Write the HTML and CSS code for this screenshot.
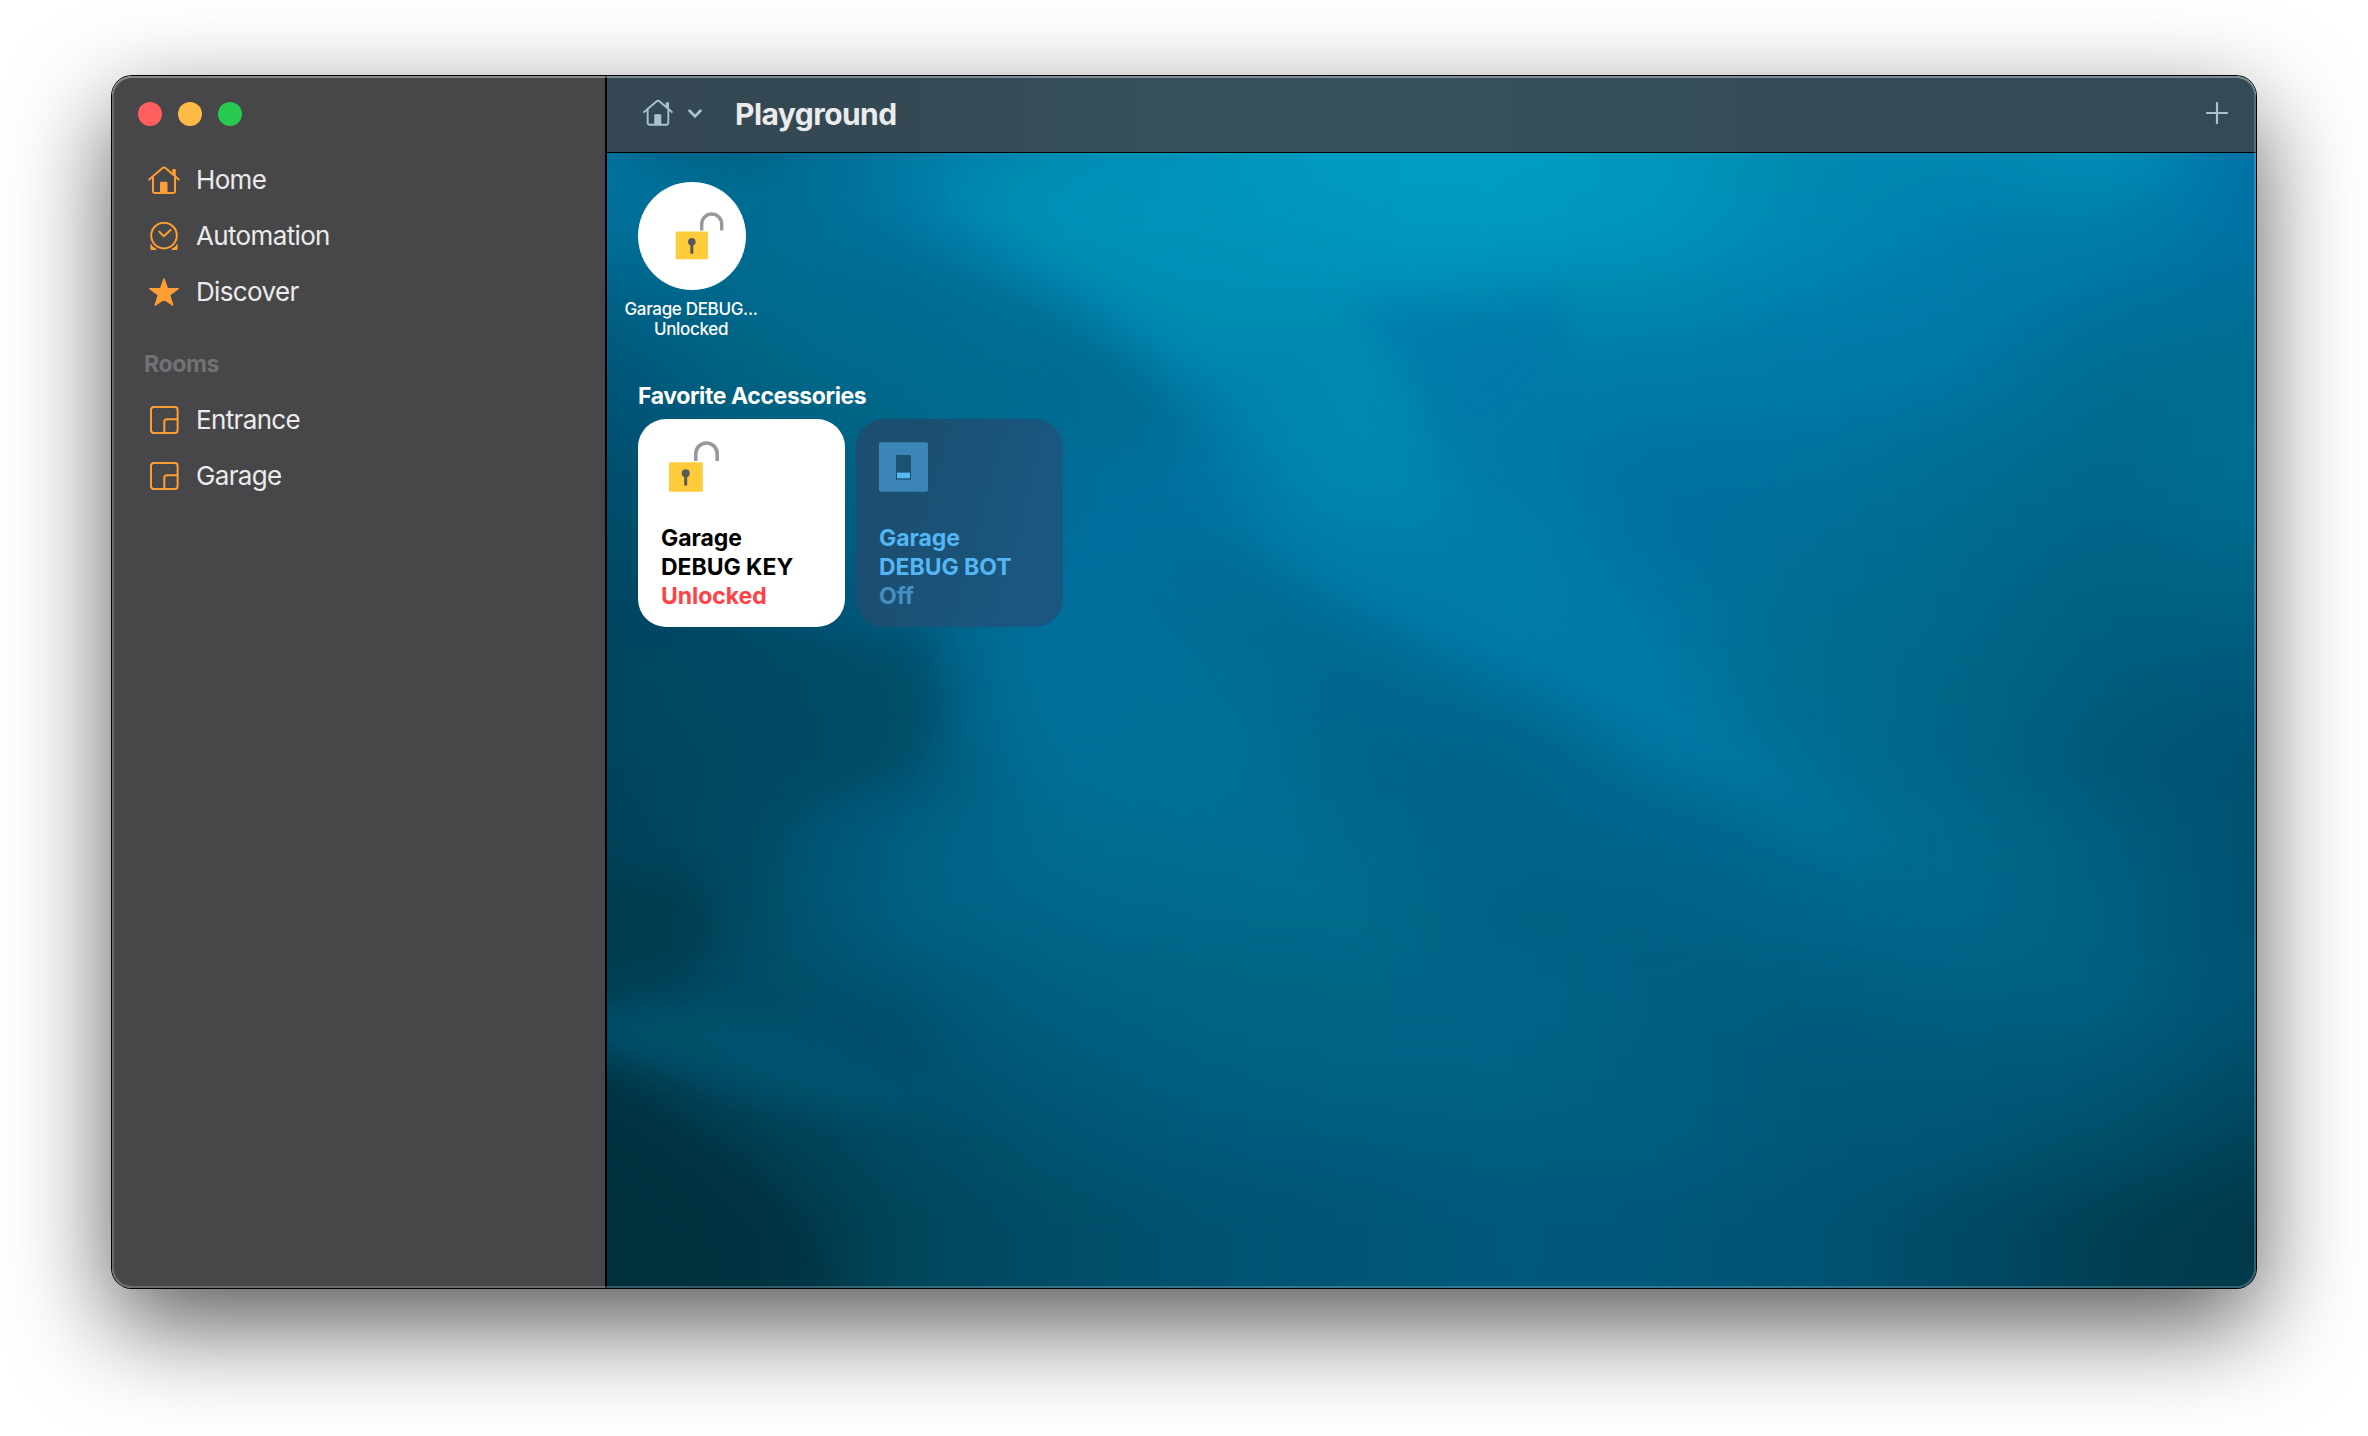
FILE: index.html
```html
<!DOCTYPE html>
<html lang="en">
<head>
<meta charset="utf-8">
<title>Home</title>
<link rel="stylesheet" href="styles.css">
</head>
<body>
<svg class="defs" aria-hidden="true">
  <symbol id="i-house" viewBox="0 0 32 28">
    <g fill="none" stroke="currentColor" stroke-width="2" stroke-linecap="round" stroke-linejoin="round">
      <path d="M1.2 13.4 L14.9 1.8 Q16 1 17.1 1.8 L30.8 13.4"/>
      <path d="M5 11.5 V25 Q5 27 7 27 H25 Q27 27 27 25 V11.5"/>
    </g>
    <path fill="currentColor" d="M24.2 8.5 V4 Q24.2 3 25.2 3 H26.8 Q27.8 3 27.8 4 V11.5 Z"/>
    <path fill="currentColor" d="M12 27 V16.8 Q12 15.8 13 15.8 H18.5 Q19.5 15.8 19.5 16.8 V27 Z"/>
  </symbol>
  <symbol id="i-clock" viewBox="0 0 32 28">
    <g fill="none" stroke="currentColor" stroke-width="2" stroke-linecap="round" stroke-linejoin="round">
      <circle cx="16" cy="13.6" r="12.8"/>
      <path d="M11.2 9.6 L15.8 14.3 L22.6 7.9"/>
    </g>
    <path fill="currentColor" d="M2.3 21.6 Q4.6 25.4 8.8 27 Q8.4 28 7.4 28 H3.6 Q2.3 28 2.3 26.6 Z M29.7 21.6 Q27.4 25.4 23.2 27 Q23.6 28 24.6 28 H28.4 Q29.7 28 29.7 26.6 Z"/>
  </symbol>
  <symbol id="i-star" viewBox="0 0 32 28">
    <path fill="currentColor" stroke="currentColor" stroke-width="1.4" stroke-linejoin="round" d="M16 .9 L19.4 10.5 L30.2 10.7 L21.6 17 L24.8 27.2 L16 21.2 L7.2 27.2 L10.4 17 L1.8 10.7 L12.6 10.5 Z"/>
  </symbol>
  <symbol id="i-room" viewBox="0 0 32 28">
    <g fill="none" stroke="currentColor" stroke-width="2">
      <rect x="3" y="1" width="26.6" height="26" rx="3"/>
      <path d="M16.3 27 V15.8 Q16.3 13.2 18.9 13.2 H29.6"/>
    </g>
  </symbol>
</svg>

<div class="window">
  <aside class="sidebar">
    <div class="lights">
      <span class="light light-close"></span>
      <span class="light light-min"></span>
      <span class="light light-zoom"></span>
    </div>
    <nav class="nav">
      <a class="nav-item"><svg class="nav-icon"><use href="#i-house"/></svg><span>Home</span></a>
      <a class="nav-item"><svg class="nav-icon"><use href="#i-clock"/></svg><span>Automation</span></a>
      <a class="nav-item"><svg class="nav-icon"><use href="#i-star"/></svg><span>Discover</span></a>
      <h2 class="nav-heading">Rooms</h2>
      <a class="nav-item"><svg class="nav-icon"><use href="#i-room"/></svg><span>Entrance</span></a>
      <a class="nav-item"><svg class="nav-icon"><use href="#i-room"/></svg><span>Garage</span></a>
    </nav>
  </aside>

  <main class="main">
    <header class="toolbar">
      <svg class="tool-house"><use href="#i-house"/></svg>
      <svg class="chevron" viewBox="0 0 14 10"><path d="M1.6 1.8 L7 7.4 L12.4 1.8" fill="none" stroke="currentColor" stroke-width="2.8" stroke-linecap="round" stroke-linejoin="round"/></svg>
      <h1 class="title">Playground</h1>
      <svg class="plus" viewBox="0 0 22 22"><path d="M11 1 V21 M1 11 H21" fill="none" stroke="currentColor" stroke-width="2.2" stroke-linecap="round"/></svg>
    </header>

    <section class="content">
      <div class="wallpaper">
        <div class="mesh">
          <i class="m1"></i><i class="m2"></i><i class="m3"></i><i class="m4"></i><i class="m5"></i>
          <i class="m6"></i><i class="m7"></i><i class="m8"></i><i class="m9"></i><i class="m10"></i>
          <i class="m11"></i><i class="m12"></i><i class="m13"></i><i class="m14"></i><i class="m15"></i>
        </div>
        <svg class="folds" viewBox="402 101 1092 752" preserveAspectRatio="none">
          <defs>
            <filter id="b8" x="-30%" y="-30%" width="160%" height="160%"><feGaussianBlur stdDeviation="10"/></filter>
            <filter id="b14" x="-30%" y="-30%" width="160%" height="160%"><feGaussianBlur stdDeviation="17"/></filter>
          </defs>
          <path filter="url(#b8)" fill="#005f80" opacity=".5" d="M402 80 L530 80 L500 112 L430 112 Z"/>
          <path filter="url(#b14)" fill="#006a90" opacity=".55" d="M520 165 L640 178 L700 205 L755 245 L790 295 L750 305 L640 270 L520 230 Z"/>
          <path filter="url(#b14)" fill="#0094ba" opacity=".55" d="M590 115 L720 115 L900 150 L890 195 L800 240 L730 195 L650 150 Z"/>
          <path filter="url(#b14)" fill="#008ab2" opacity=".55" d="M720 190 L880 190 L925 240 L955 330 L965 370 L880 350 L800 260 Z"/>
          <path filter="url(#b8)" fill="#0078a8" opacity=".65" d="M893 200 L960 202 L1040 200 L1030 250 L960 300 L935 250 Z"/>
          <path filter="url(#b14)" fill="#007ca8" opacity=".5" d="M860 330 L960 340 L1090 430 L1220 540 L1260 580 L1120 515 L990 440 L860 370 Z"/>
          <path filter="url(#b14)" fill="#00628a" opacity=".45" d="M770 345 L870 395 L1000 465 L1120 530 L1250 600 L1130 610 L960 580 L880 490 Z"/>
          <path filter="url(#b14)" fill="#00719a" opacity=".4" d="M640 400 L760 400 L830 470 L900 600 L780 560 L650 500 Z"/>
          <path filter="url(#b8)" fill="#00465e" opacity=".5" d="M380 420 L610 420 L622 470 L600 515 L535 530 L512 560 L505 600 L490 630 L380 640 Z"/>
          <path filter="url(#b8)" fill="#003a4c" opacity=".6" d="M380 580 L455 580 L475 620 L450 645 L380 645 Z"/>
          <path filter="url(#b8)" fill="#005472" opacity=".7" d="M380 668 L480 666 L560 700 L640 740 L560 735 L470 710 L380 695 Z"/>
          <path filter="url(#b8)" fill="#004c68" opacity=".5" d="M540 655 L600 662 L630 700 L600 712 L560 690 Z"/>
          <path filter="url(#b8)" fill="#003040" opacity=".6" d="M380 705 L430 728 L490 765 L540 815 L562 880 L380 880 Z"/>
        </svg>
      </div>

      <div class="body">
        <div class="status">
          <div class="status-disc">
            <svg viewBox="0 0 108 108">
              <path d="M63.7 48.5 V42 a10 10 0 0 1 20 0 V48.5" fill="none" stroke="#999" stroke-width="3.4"/>
              <rect x="37.7" y="49.5" width="32.3" height="27.8" rx="1.4" fill="#fecb3b"/>
              <circle cx="53.8" cy="59.8" r="3.8" fill="#58585a"/>
              <path d="M53.8 60 V71.7" stroke="#58585a" stroke-width="3"/>
            </svg>
          </div>
          <div class="status-name">Garage DEBUG...</div>
          <div class="status-value">Unlocked</div>
        </div>

        <h2 class="section-title">Favorite Accessories</h2>
        <div class="cards">
          <article class="card card-on">
            <svg class="card-icon" viewBox="0 0 60 52">
              <path d="M33.8 20 V12.7 a10.7 10.7 0 0 1 21.4 0 V20" fill="none" stroke="#999" stroke-width="3.6"/>
              <rect x="7" y="21.3" width="33.8" height="29.5" rx="1.4" fill="#fecb3b"/>
              <circle cx="23.7" cy="32.2" r="4" fill="#58585a"/>
              <path d="M23.7 32 V44.5" stroke="#58585a" stroke-width="3"/>
            </svg>
            <div class="card-text">
              <div>Garage</div>
              <div>DEBUG KEY</div>
              <div class="card-state">Unlocked</div>
            </div>
          </article>
          <article class="card card-off">
            <svg class="card-icon" viewBox="0 0 60 52">
              <rect x="-1" y="1.2" width="49" height="49.6" rx="2" fill="#3b86b6"/>
              <rect x="16" y="14" width="15" height="24" fill="#1b526f"/>
              <rect x="16" y="36.5" width="15" height="2" fill="#0b405e"/>
              <rect x="17" y="31.6" width="13" height="5.8" fill="#55b9f4"/>
            </svg>
            <div class="card-text">
              <div>Garage</div>
              <div>DEBUG BOT</div>
              <div class="card-state">Off</div>
            </div>
          </article>
        </div>
      </div>
    </section>
  </main>
</div>
</body>
</html>
```
FILE: styles.css
```css
* { box-sizing: border-box; }

body {
  margin: 0;
  height: 1436px;
  padding: 76px 112px;
  background: #fff;
  font-family: Inter, "Liberation Sans", sans-serif;
  overflow: hidden;
}

h1, h2 { margin: 0; }
.defs { display: none; }

.window {
  position: relative;
  display: flex;
  width: 2144px;
  height: 1212px;
  border-radius: 20px;
  box-shadow: 0 0 0 1px #000, 0 36px 100px rgba(0, 0, 0, .66);
}

/* bright hairline just inside the window edge */
.window::after {
  content: "";
  position: absolute;
  inset: 0;
  border-radius: 20px;
  box-shadow: inset 0 0 0 2px rgba(255, 255, 255, .2), inset 0 2px 0 rgba(255, 255, 255, .2);
  pointer-events: none;
}

.sidebar {
  width: 495px;
  padding-top: 26px;
  background: #474749;
  border-right: 2px solid #000;
  border-radius: 20px 0 0 20px;
}

.lights { display: flex; gap: 16px; padding-left: 26px; }
.light { width: 24px; height: 24px; border-radius: 50%; }
.light-close { background: #ff5f5d; }
.light-min { background: #febb45; }
.light-zoom { background: #27c94f; }

.nav { margin-top: 26px; }
.nav-item {
  display: flex;
  align-items: center;
  gap: 16px;
  height: 56px;
  padding-left: 36px;
  color: #ebebec;
  font-size: 26px;
  line-height: 32px;
  letter-spacing: -.65px;
}
.nav-item span { padding-bottom: 1px; }
.nav-icon { width: 32px; height: 28px; color: #ff9f33; }
.nav-heading {
  height: 72px;
  padding: 30px 0 0 32px;
  color: #727274;
  font-size: 23px;
  font-weight: 650;
  line-height: 29px;
  letter-spacing: -.35px;
}

.main {
  flex: 1;
  display: flex;
  flex-direction: column;
  border-radius: 0 20px 20px 0;
  overflow: hidden;
}

.toolbar {
  display: flex;
  align-items: center;
  height: 77px;
  padding: 0 28px 0 36px;
  border-bottom: 1px solid #000;
  background: linear-gradient(90deg, #344753 0, #344954 18%, #35505a 32%, #35515b 50%, #344c57 72%, #344a56 100%);
  color: #a9c2d0;
}
.tool-house { width: 30px; height: 27px; margin-bottom: 3px; }
.chevron { width: 14px; height: 10px; margin-left: 15px; }
.title {
  margin-left: 33px;
  color: #ebebed;
  font-size: 30px;
  font-weight: 650;
  line-height: 38px;
  letter-spacing: -.55px;
}
.plus { width: 22px; height: 22px; margin: 0 0 3px auto; }

.content { position: relative; flex: 1; overflow: hidden; }

/* wallpaper: colour strips melted together, with softer folds over them */
.wallpaper { position: absolute; inset: 0; overflow: hidden; background: #006a90; }
.mesh {
  position: absolute;
  inset: -76px -80px -80px;
  display: flex;
  flex-direction: column;
  filter: blur(32px);
}
.mesh i { flex: 0 0 76px; }
.folds { position: absolute; inset: 0; width: 100%; height: 100%; }

.mesh .m1 { flex-basis: 114px; background: linear-gradient(90deg, #0074a0 80px, #00688c, #0078a2, #008cb4, #0094bc, #009cc2, #009ec2, #0098bc, #0088b0, #0086b0, #0090b8, #0070a4 calc(100% - 80px)); }
.m2 { background: linear-gradient(90deg, #00709c 80px, #006c90, #0076a4, #008cb4, #0094ba, #0098be, #009ac0, #0094bc, #0088b2, #007eac, #007ea8, #0070a4 calc(100% - 80px)); }
.m3 { background: linear-gradient(90deg, #005f84 80px, #006a8c, #006a90, #007aa4, #0088b2, #008eb6, #0086b0, #0086ae, #007eac, #007aa8, #0072a0, #006e98 calc(100% - 80px)); }
.m4 { background: linear-gradient(90deg, #005578 80px, #006484, #006a8c, #006a8e, #0078a4, #008ab2, #007ca8, #007aa8, #0078a6, #0076a4, #006c90, #006c8c calc(100% - 80px)); }
.m5 { background: linear-gradient(90deg, #004e70 80px, #005a7a, #006688, #006c98, #0074a2, #0088b0, #0078a4, #0072a0, #0074a0, #006e94, #00688c, #006e90 calc(100% - 80px)); }
.m6 { background: linear-gradient(90deg, #004c68 80px, #005474, #00628a, #006c9a, #0072a0, #0084ac, #007eaa, #0070a0, #006e98, #006a8e, #006488, #006a8c calc(100% - 80px)); }
.m7 { background: linear-gradient(90deg, #004460 80px, #004c6c, #005e84, #0072a0, #006c94, #0076a4, #007eaa, #0076a4, #006c90, #00688c, #006080, #006084 calc(100% - 80px)); }
.m8 { background: linear-gradient(90deg, #00455e 80px, #004c68, #005674, #00729e, #006e96, #006c92, #0072a0, #0078a4, #006c90, #006688, #005c7c, #00587a calc(100% - 80px)); }
.m9 { background: linear-gradient(90deg, #00405a 80px, #004a64, #005472, #006e98, #007096, #00668a, #006688, #0074a0, #006e94, #006488, #005878, #005070 calc(100% - 80px)); }
.m10 { background: linear-gradient(90deg, #003c54 80px, #004e6a, #005f84, #006c8e, #006e90, #00688c, #00648a, #00688e, #006e94, #006a8c, #005e80, #00506e calc(100% - 80px)); }
.m11 { background: linear-gradient(90deg, #003a4c 80px, #004e68, #006084, #00668a, #006a8c, #006c8c, #006084, #006084, #00668a, #00688c, #006080, #005070 calc(100% - 80px)); }
.m12 { background: linear-gradient(90deg, #004258 80px, #004c66, #005674, #006082, #006486, #006688, #00648a, #005e82, #005c80, #006084, #006080, #005272 calc(100% - 80px)); }
.m13 { background: linear-gradient(90deg, #003c4e 80px, #004e6a, #005270, #005a7a, #006082, #006284, #006286, #005e80, #005a7a, #005a7a, #005878, #004c68 calc(100% - 80px)); }
.m14 { background: linear-gradient(90deg, #003040 80px, #003e50, #004a64, #005472, #005a7c, #005c80, #005e80, #005e80, #005878, #005676, #004f6a, #004258 calc(100% - 80px)); }
.mesh .m15 { flex: 1; background: linear-gradient(90deg, #002d3a 80px, #003646, #00465a, #004d68, #005270, #005676, #005a7c, #00587a, #005474, #004a66, #004054, #003848 calc(100% - 80px)); }

.body { position: relative; padding: 29px 0 0 31px; }

.status { width: 140px; margin-left: -16px; text-align: center; color: #fff; }
.status-disc {
  width: 108px;
  height: 108px;
  margin: 0 auto 9px;
  border-radius: 50%;
  background: #fff;
}
.status-name, .status-value {
  padding-right: 2px;
  font-size: 17px;
  font-weight: 500;
  line-height: 20px;
  letter-spacing: -.33px;
  white-space: nowrap;
}

.section-title {
  margin: 43px 0 9px;
  color: #fff;
  font-size: 23px;
  font-weight: 650;
  line-height: 28px;
  letter-spacing: -.4px;
}

.cards { display: flex; gap: 11px; }
.card {
  display: flex;
  flex-direction: column;
  justify-content: space-between;
  width: 207px;
  height: 208px;
  padding: 22px 0 16px 24px;
  border-radius: 28px;
  font-size: 23px;
  font-weight: 650;
  line-height: 29px;
  letter-spacing: -.05px;
}
.card-icon { width: 60px; height: 52px; overflow: visible; }
.card-text { margin-left: -1px; }
.card-on { background: #fff; color: #000; }
.card-on .card-state { color: #ff4245; }
.card-off { background: linear-gradient(105deg, #1b4e70 20%, #1a5780 80%); color: #54b6f3; }
.card-off .card-state { color: #458fc3; }
```
